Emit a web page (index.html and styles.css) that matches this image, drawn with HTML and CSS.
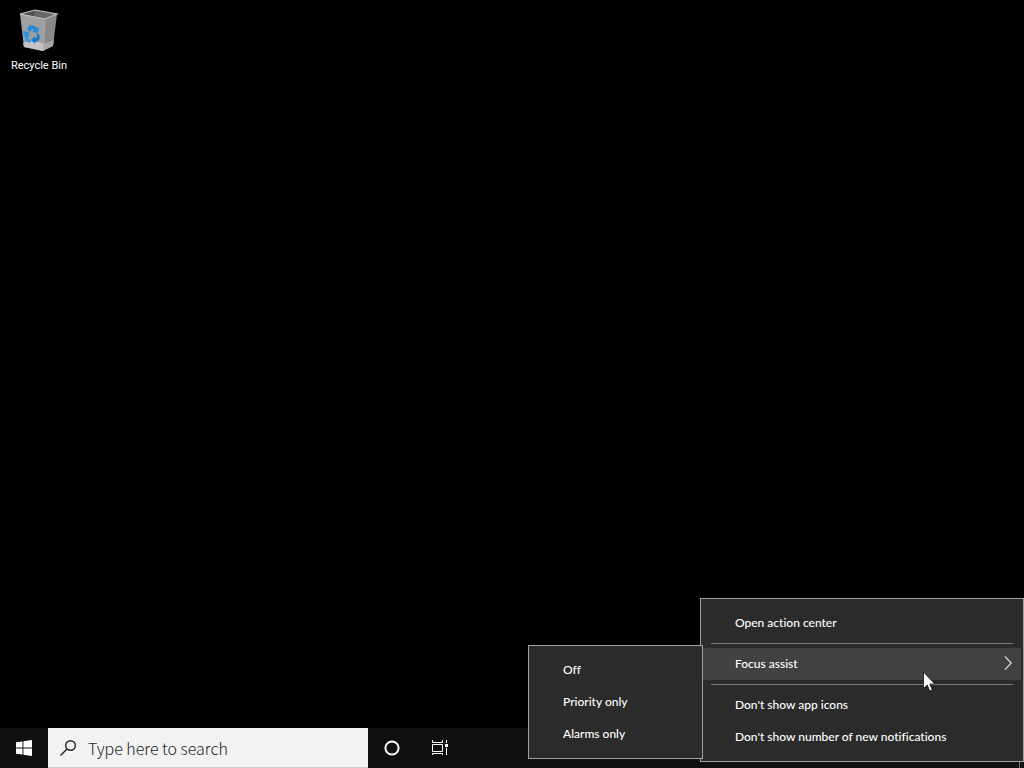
FILE: index.html
```
<!DOCTYPE html>
<html lang="en">
<head>
  <meta charset="UTF-8" />
  <meta name="viewport" content="width=device-width, initial-scale=1.0"/>
  <title>Desktop</title>
  <link rel="stylesheet" href="styles.css">
</head>
<body>
  <main class="desktop">
    <button class="shortcut" type="button">
      <svg class="shortcut-icon" viewBox="0 0 48 48" aria-hidden="true">
        <path d="M5 6 L20 2 L42 6 L30 11 Z" fill="#4c4c4e"/>
        <path d="M20 2 L42 6 L30 11 L19 8 Z" fill="#68686a"/>
        <path d="M5 6 L30 11 L28 43 L9 39 Z" fill="#a0a0a3"/>
        <path d="M30 11 L42 6 L38 38 L28 43 Z" fill="#89898c"/>
        <path d="M8 35 L18 32 L28 36 L28 43 L9 39 Z" fill="#c4c4c6"/>
        <path d="M28 36 L39 32 L38 38 L28 43 Z" fill="#a8a8aa"/>
        <path d="M5 6 L20 2 L42 6 L30 11 Z" fill="none" stroke="#c4c4c4" stroke-width="1.2"/>
        <path d="M30 11 L28 43" stroke="#b4b4b6"/>
        <path d="M12 21 L15 17 L20 18 L22 20 L24 19 L23 25 L17 24 L19 22 L17 21 L15 24 Z" fill="#2388d5"/>
        <path d="M8 23 L14 24 L15 29 L13 28 L13 31 L16 32 L15 35 L11 33 L9 27 Z" fill="#3195df"/>
        <path d="M21 26 L24 26 L25 30 L22 34 L20 34 L20 36 L16 32 L20 28 L20 30 L22 29 Z" fill="#1c7ccc"/>
      </svg>
      <span>Recycle Bin</span>
    </button>
  </main>

  <footer class="taskbar">
    <button class="task-button" type="button" aria-label="Start">
      <svg width="16" height="16" viewBox="0 0 16 16" fill="#fff">
        <path d="M0 2.3 L6.5 1.4 V7.5 H0 Z M7.4 1.2 L16 0 V7.5 H7.4 Z M0 8.4 H6.5 V14.6 L0 13.7 Z M7.4 8.4 H16 V16 L7.4 14.8 Z"/>
      </svg>
    </button>
    <label class="search">
      <svg width="16" height="16" viewBox="0 0 16 16" fill="none" stroke="#222" stroke-width="1.4">
        <circle cx="10.5" cy="5.5" r="4.8"/>
        <path d="M7 9 L0.5 15.5"/>
      </svg>
      <input type="text" placeholder="Type here to search" aria-label="Search">
    </label>
    <button class="task-button" type="button" aria-label="Cortana">
      <svg width="16" height="16" viewBox="0 0 16 16" fill="none" stroke="#fff" stroke-width="2">
        <circle cx="8" cy="8" r="6.6"/>
      </svg>
    </button>
    <button class="task-button" type="button" aria-label="Task View">
      <svg width="16" height="16" viewBox="0 0 16 16" fill="none" stroke="#fff">
        <path d="M.5 0 V2.5 H10.5 V0 M.5 4.5 H10.5 V11.5 H.5 Z M.5 15 V13.5 H10.5 V15 M14.5 0 V3 M14.5 8 V15"/>
        <path d="M13 4 H16 V7 H13 Z" fill="#fff" stroke="none"/>
      </svg>
    </button>
    <button class="show-desktop" type="button" aria-label="Show desktop"></button>
  </footer>

  <div class="menu context-menu" role="menu">
    <button class="menu-item" type="button" role="menuitem">Open action center</button>
    <hr>
    <div class="menu-group">
      <button class="menu-item active" type="button" role="menuitem" aria-haspopup="true" aria-expanded="true">
        Focus assist
        <svg width="8" height="14" viewBox="0 0 8 14" fill="none" stroke="#ddd" stroke-width="1.2">
          <path d="M1 .5 L7.2 7 L1 13.5"/>
        </svg>
      </button>
      <div class="menu submenu" role="menu">
        <button class="menu-item" type="button" role="menuitem">Off</button>
        <button class="menu-item" type="button" role="menuitem">Priority only</button>
        <button class="menu-item" type="button" role="menuitem">Alarms only</button>
      </div>
    </div>
    <hr>
    <button class="menu-item" type="button" role="menuitem">Don't show app icons</button>
    <button class="menu-item" type="button" role="menuitem">Don't show number of new notifications</button>
  </div>

  <svg class="cursor" width="12" height="21" viewBox="0 0 12 21" aria-hidden="true">
    <path d="M.5 1 V17.5 L4.2 14 L6.8 20 L9.3 19 L6.8 13 H11.8 Z" fill="#fff" stroke="#111" stroke-width="0.8"/>
  </svg>
</body>
</html>
```
FILE: styles.css
```
* { box-sizing: border-box; margin: 0; padding: 0; }
body {
  display: flex;
  flex-direction: column;
  height: 100vh;
  overflow: hidden;
  background: #000;
  color: #fff;
  font-family: Lato, "Open Sans", sans-serif;
  font-size: 12px;
}
button {
  border: 0;
  background: none;
  color: inherit;
  font: inherit;
}
.desktop {
  flex: 1;
  padding: 8px 2px;
}
.shortcut {
  display: flex;
  flex-direction: column;
  align-items: center;
  width: 74px;
  font-family: Roboto, sans-serif;
  font-size: 11px;
  line-height: 20px;
}
.shortcut-icon {
  width: 48px;
  height: 48px;
}

/* taskbar */
.taskbar {
  display: flex;
  height: 40px;
  background: #101010;
}
.task-button {
  display: flex;
  align-items: center;
  justify-content: center;
  width: 48px;
}
.search {
  display: flex;
  align-items: center;
  gap: 12px;
  width: 320px;
  padding: 0 12px;
  background: #f2f2f2;
  border: 1px solid #ccc;
  border-width: 0 0 1px;
}
.search input {
  flex: 1;
  min-width: 0;
  border: 0;
  outline: 0;
  background: none;
  font-family: "Noto Sans CJK JP", "Noto Sans", sans-serif;
  font-size: 16px;
  font-weight: 300;
}
.search input::placeholder {
  color: #222;
  opacity: 1;
}
.show-desktop {
  width: 5px;
  margin-left: auto;
  border-left: 1px solid #777;
}

/* menus */
.menu {
  position: absolute;
  padding: 8px 2px;
  background: #2b2b2b;
  border: 1px solid #a0a0a0;
  font-weight: 500;
}
.context-menu {
  right: 0;
  bottom: 6px;
  width: 324px;
}
.submenu {
  top: -3px;
  right: 100%;
  width: 175px;
}
.menu-group {
  position: relative;
}
.menu-item {
  display: flex;
  align-items: center;
  justify-content: space-between;
  width: 100%;
  height: 32px;
  padding: 0 9px 2px 32px;
  font-variant-ligatures: none;
  text-align: left;
}
.menu-item.active {
  background: #414141;
}
hr {
  height: 1px;
  margin: 4px 8px;
  border: 0;
  background: #808080;
}

.cursor {
  position: absolute;
  right: 89px;
  bottom: 76px;
}
```
